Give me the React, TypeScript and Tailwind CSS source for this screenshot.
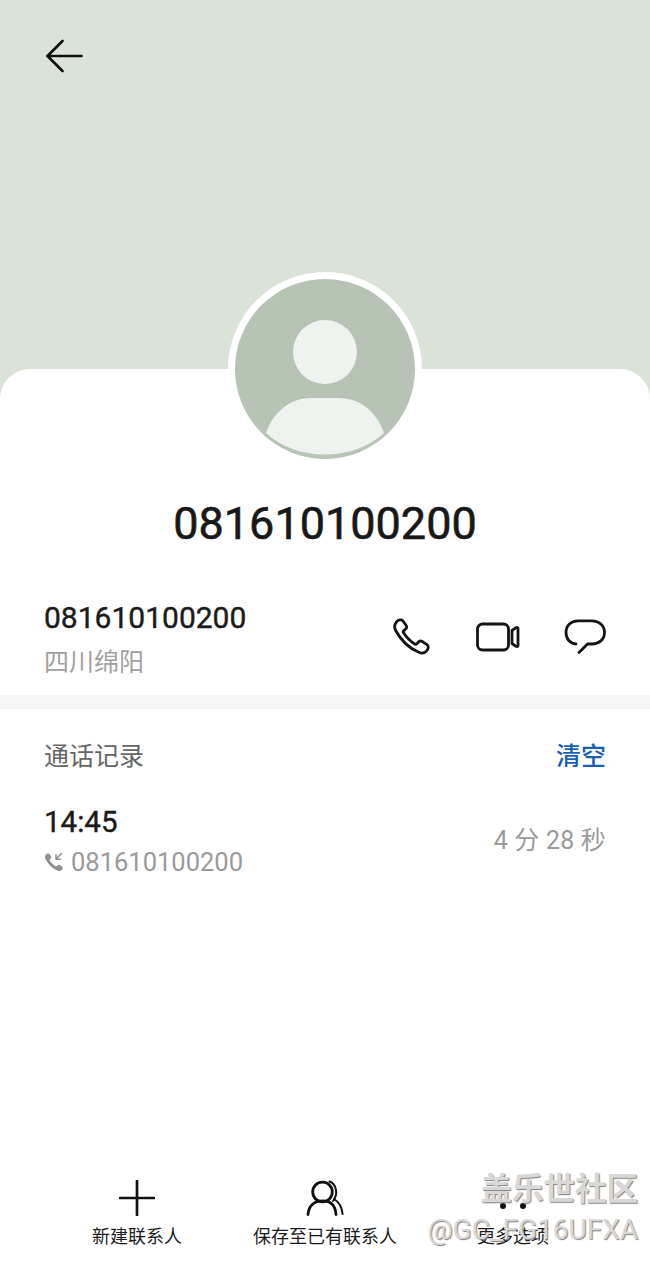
const font = { fontFamily: '"Roboto", "Noto Sans CJK SC", sans-serif' };

function Back() {
  return (
    <svg width="38" height="34" viewBox="0 0 38 34" fill="none" stroke="#111" strokeWidth="2.7" strokeLinecap="round" strokeLinejoin="round">
      <path d="M2.500 17H36.500" />
      <path d="M17.500 2L2.500 17L17.500 32" />
    </svg>
  );
}

function Avatar() {
  return (
    <svg width="180" height="180" viewBox="0 0 180 180">
      <circle cx="90" cy="90" r="90" fill="#b6c3b5" />
      <circle cx="90" cy="73" r="32" fill="#eff3ef" />
      <path d="M31 154C38 134 54 119 76 119H104C126 119 142 134 149 154C134 168 113 175.500 90 175.500C67 175.500 46 168 31 154Z" fill="#eff3ef" />
    </svg>
  );
}

function Phone() {
  return (
    <svg width="40" height="40" viewBox="0 0 40 40" fill="none" stroke="#151515" strokeWidth="2.800" strokeLinejoin="round">
      <path d="M4.500 4.800C6.500 2.700 9.400 2.300 10.800 3.800L14 8.300C15 9.800 14.700 11.200 13.500 12.200L11.800 13.600C11.200 14.200 11.100 15 11.600 15.800C14.400 20.200 18.400 24.400 22.700 27C23.600 27.500 24.400 27.300 25 26.600L26.400 25C27.400 23.900 28.800 23.700 30.200 24.500L35 27.600C36.800 28.900 36.600 31.800 34.600 33.900C32.800 35.700 29.600 36.600 26.800 35.300C16.400 30.900 8.600 22.800 3.400 13C2.200 10.200 3 6.600 4.500 4.800Z" />
    </svg>
  );
}

function Video() {
  return (
    <svg width="44" height="30" viewBox="0 0 44 30" fill="none" stroke="#151515" strokeWidth="2.800" strokeLinejoin="round">
      <rect x="1.500" y="2" width="31" height="26" rx="5" />
      <path d="M42 6.500V23.500C42 24.600 41 25 40 24.400L36 21.500V8.500L40 5.600C41 5 42 5.400 42 6.500Z" />
    </svg>
  );
}

function Chat() {
  return (
    <svg width="42" height="36" viewBox="0 0 42 36" fill="none" stroke="#151515" strokeWidth="2.800" strokeLinecap="round" strokeLinejoin="round">
      <path d="M12 25C6 24.500 2 20 2 13.500C2 6.500 7 1.800 14 1.800H28C35 1.800 40.500 6.500 40.500 13.500C40.500 20.500 35 25 28 25H23.500L15 33.500" />
    </svg>
  );
}

function IncomingCall() {
  return (
    <svg width="20" height="20" viewBox="0 0 20 20" fill="none">
      <path d="M2 2.500C3 1.300 4.600 1 5.400 1.900L7 4.300C7.500 5.100 7.300 5.900 6.700 6.400L5.900 7.200C5.600 7.500 5.600 8 5.800 8.400C7.300 10.800 9.400 12.900 11.700 14.300C12.200 14.500 12.600 14.400 12.900 14.100L13.700 13.200C14.200 12.700 15 12.500 15.800 13L18.100 14.700C19.100 15.400 18.900 17 17.800 18.100C16.900 19 15.200 19.400 13.800 18.800C8.200 16.400 4 12 1.300 6.700C0.700 5.200 1.200 3.500 2 2.500Z" fill="#8f8f8f" />
      <path d="M17.500 1.500L12 7M12 2.800V7.200H16.400" stroke="#8f8f8f" strokeWidth="1.500" strokeLinecap="round" strokeLinejoin="round" />
    </svg>
  );
}

function Plus() {
  return (
    <svg width="36" height="36" viewBox="0 0 36 36" fill="none" stroke="#111" strokeWidth="2.700" strokeLinecap="round">
      <path d="M1 18H35" />
      <path d="M18 1V35" />
    </svg>
  );
}

function Contact() {
  return (
    <svg width="38" height="36" viewBox="0 0 38 36" fill="none" stroke="#111" strokeLinecap="round">
      <circle cx="16.500" cy="12" r="9.800" strokeWidth="2.800" />
      <path d="M2 34.500C2.500 26 8 20.800 16.500 20.800C25 20.800 29.500 26 30 34.500" strokeWidth="2.800" />
      <path d="M23.500 1.500C30.500 4 32.500 14 27 21" strokeWidth="2" />
      <path d="M28 19C33 22 36 27 36.600 34" strokeWidth="2" />
    </svg>
  );
}

function BottomAction({ icon, label, className }: { icon: React.ReactNode; label: string; className: string }) {
  return (
    <div className={`flex flex-col items-center ${className}`}>
      <div className="h-[36px] flex items-center justify-center">{icon}</div>
      <span className="mt-[8px] text-[18px] leading-[26px] text-[#1c1c1c]">{label}</span>
    </div>
  );
}

export default function App() {
  return (
    <div style={font} className="relative w-[650px] h-[1263px] overflow-hidden bg-[#dbe3d8]">
      <header className="h-[369px] pl-[45px] pt-[39px]">
        <Back />
      </header>

      <main className="h-[894px] bg-white rounded-t-[30px] flex flex-col">
        <div className="relative h-[90px]">
          <div className="absolute left-[228px] top-[-97px] w-[194px] h-[194px] rounded-full bg-white flex items-center justify-center">
            <Avatar />
          </div>
        </div>

        <h1 className="mt-[35px] text-center text-[45px] leading-[60px] font-normal [-webkit-text-stroke:0.6px_#181818] text-[#181818]">081610100200</h1>

        <section className="mt-[42px] h-[99px] px-[44px] flex justify-between">
          <div>
            <div className="text-[30px] leading-[44px] font-normal [-webkit-text-stroke:0.4px_#1b1b1b] text-[#1b1b1b]">081610100200</div>
            <div className="mt-[1px] text-[25px] leading-[44px] text-[#a1a1a1]">四川绵阳</div>
          </div>
          <div className="flex items-center gap-[44px] h-[60px] mt-[11px]">
            <Phone />
            <Video />
            <Chat />
          </div>
        </section>

        <div className="h-[14px] bg-[#f6f6f6]" />

        <section className="px-[44px]">
          <div className="mt-[26px] flex justify-between text-[25px] leading-[44px]">
            <span className="text-[#666666]">通话记录</span>
            <span className="text-[#1a5fb0] font-medium">清空</span>
          </div>
          <div className="mt-[22px] flex justify-between items-center">
            <div>
              <div className="text-[29.500px] leading-[43px] font-normal [-webkit-text-stroke:0.4px_#1b1b1b] text-[#1b1b1b]">14:45</div>
              <div className="flex items-center gap-[7px] h-[36px]">
                <IncomingCall />
                <span className="text-[25.500px] text-[#9a9a9a]">081610100200</span>
              </div>
            </div>
            <span className="text-[25px] tracking-[0.200px] text-[#9a9a9a]">4 分 28 秒</span>
          </div>
        </section>

        <div className="mt-auto h-[83px] flex">
          <BottomAction icon={<Plus />} label="新建联系人" className="ml-[92px] w-[90px]" />
          <BottomAction icon={<Contact />} label="保存至已有联系人" className="ml-[71px] w-[144px]" />
          <BottomAction
            icon={
              <div className="flex gap-[14px] items-end h-[36px] pb-[7px]">
                <span className="w-[6px] h-[6px] rounded-full bg-[#111]" />
                <span className="w-[6px] h-[6px] rounded-full bg-[#111]" />
              </div>
            }
            label="更多选项"
            className="ml-[80px] w-[72px]"
          />
        </div>
      </main>

      <div className="absolute right-[12px] top-[1171px] flex flex-col items-end text-[#d8d8d8] [text-shadow:1px_1px_1px_#808080]">
        <span className="text-[31.500px] leading-[38px] font-bold">盖乐世社区</span>
        <span className="mt-[3px] text-[28px] leading-[36px]">@GC_FG16UFXA</span>
      </div>
    </div>
  );
}
